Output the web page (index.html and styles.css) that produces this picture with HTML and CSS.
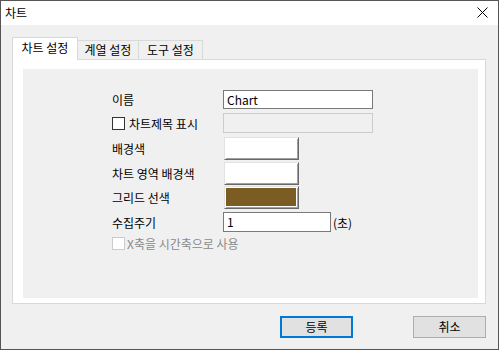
FILE: index.html
```html
<!DOCTYPE html>
<html>
<head>
     <meta charset="utf-8">
     <title>차트</title>
     <link rel="stylesheet" href="styles.css">
</head>
<body>
     <div class="window">
          <div class="titlebar">
               <span class="title">차트</span>
               <svg class="close" width="11" height="11" viewBox="0 0 11 11">
                    <path d="M0.5 0.5 L10.5 10.5 M10.5 0.5 L0.5 10.5" stroke="#000" stroke-width="1" fill="none"/>
               </svg>
          </div>

          <div class="content">
               <div class="tabs">
                    <div class="tab sel">차트 설정</div>
                    <div class="tab t2">계열 설정</div>
                    <div class="tab t3">도구 설정</div>
               </div>

               <div class="panel">
                    <div class="inner">
                         <div class="form">
                              <div class="lbl">이름</div>
                              <div class="ctl"><div class="input w1">Chart</div></div>

                              <div class="lbl"><span class="chk"></span>차트제목 표시</div>
                              <div class="ctl"><div class="input w1 off"></div></div>

                              <div class="lbl">배경색</div>
                              <div class="ctl"><div class="color"></div></div>

                              <div class="lbl">차트 영역 배경색</div>
                              <div class="ctl"><div class="color"></div></div>

                              <div class="lbl">그리드 선색</div>
                              <div class="ctl"><div class="color"><div class="fill"></div></div></div>

                              <div class="lbl">수집주기</div>
                              <div class="ctl"><div class="input w2">1</div><span class="unit">(초)</span></div>

                              <div class="lbl wide dis"><span class="chk off"></span>X축을 시간축으로 사용</div>
                         </div>
                    </div>
               </div>

               <div class="footer">
                    <button class="btn def">등록</button>
                    <button class="btn">취소</button>
               </div>
          </div>
     </div>
</body>
</html>
```

FILE: styles.css
```css
* {
     box-sizing: border-box;
}

body {
     margin: 0;
     font-family: "Noto Sans CJK KR", "Noto Sans", sans-serif;
     font-size: 12px;
     color: #000;
}

.window {
     width: 499px;
     height: 350px;
     border: 1px solid #555;
     background-color: #f0f0f0;
}

.titlebar {
     height: 24px;
     background-color: #fff;
     display: flex;
     align-items: center;
     justify-content: space-between;
     padding: 0 10px 0 4px;
}

.title {
     font-size: 12px;
     line-height: 16px;
}

.close {
     margin-top: -1px;
}

.content {
     padding: 12px 0 0 11px;
}

.tabs {
     display: flex;
     align-items: flex-end;
     height: 22px;
}

.tab {
     height: 19px;
     border: 1px solid #d9d9d9;
     border-bottom: none;
     border-left: none;
     line-height: 18px;
     text-align: center;
     background-color: #f0f0f0;
}

.tab.sel {
     height: 23px;
     width: 66px;
     margin-bottom: -1px;
     border-left: 1px solid #d9d9d9;
     background-color: #fff;
     position: relative;
     z-index: 1;
     line-height: 20px;
}

.tab.t2 {
     width: 61px;
}

.tab.t3 {
     width: 64px;
}

.panel {
     width: 474px;
     height: 245px;
     background-color: #fff;
     border: 1px solid #d9d9d9;
     padding: 9px 7px 5px 10px;
}

.inner {
     height: 100%;
     background-color: #f0f0f0;
     padding: 21px 0 0 89px;
}

.form {
     display: grid;
     grid-template-columns: 111px auto;
     grid-template-rows: 23px 24px 25px 24px 26px 25px 13px;
     align-items: start;
}

.lbl {
     display: flex;
     align-items: center;
     height: 19px;
     white-space: nowrap;
}

.lbl:nth-child(3), .lbl:nth-child(11) {
     height: 20px;
}

.lbl:nth-child(5), .lbl:nth-child(7), .lbl:nth-child(9) {
     height: 22px;
}

.lbl.wide {
     grid-column: 1 / 3;
     height: 13px;
}

.dis {
     color: #8a8a8a;
}

.chk {
     width: 13px;
     height: 13px;
     border: 1px solid #333;
     background-color: #fff;
     margin-right: 4px;
}

.chk.off {
     border-color: #cccccc;
     margin-right: 2px;
}

.ctl {
     display: flex;
     align-items: center;
}

.input {
     height: 19px;
     border: 1px solid #7a7a7a;
     background-color: #fff;
     padding-left: 3px;
     line-height: 17px;
}

.input.w1 {
     width: 150px;
}

.input.w2 {
     width: 108px;
     height: 20px;
     line-height: 18px;
}

.input.off {
     height: 20px;
     border-color: #cccccc;
     background-color: #f0f0f0;
}

.unit {
     margin-left: 2px;
}

.color {
     width: 75px;
     height: 23px;
     margin-left: 1px;
     background-color: #fff;
     border: 1px solid;
     border-color: #e3e3e3 #696969 #696969 #e3e3e3;
     box-shadow: inset 1px 1px #fff, inset -1px -1px #a0a0a0;
     padding: 1px 2px 2px 1px;
}

.fill {
     height: 100%;
     background-color: #7b5c22;
}

.footer {
     display: flex;
     justify-content: flex-end;
     gap: 60px;
     margin-top: 12px;
     padding-right: 12px;
}

.btn {
     width: 73px;
     height: 22px;
     font-family: "Noto Sans CJK KR", "Noto Sans", sans-serif;
     font-size: 12px;
     background-color: #e1e1e1;
     border: 1px solid #adadad;
     padding: 0;
     line-height: 18px;
}

.btn.def {
     border: 2px solid #0078d7;
}
```
